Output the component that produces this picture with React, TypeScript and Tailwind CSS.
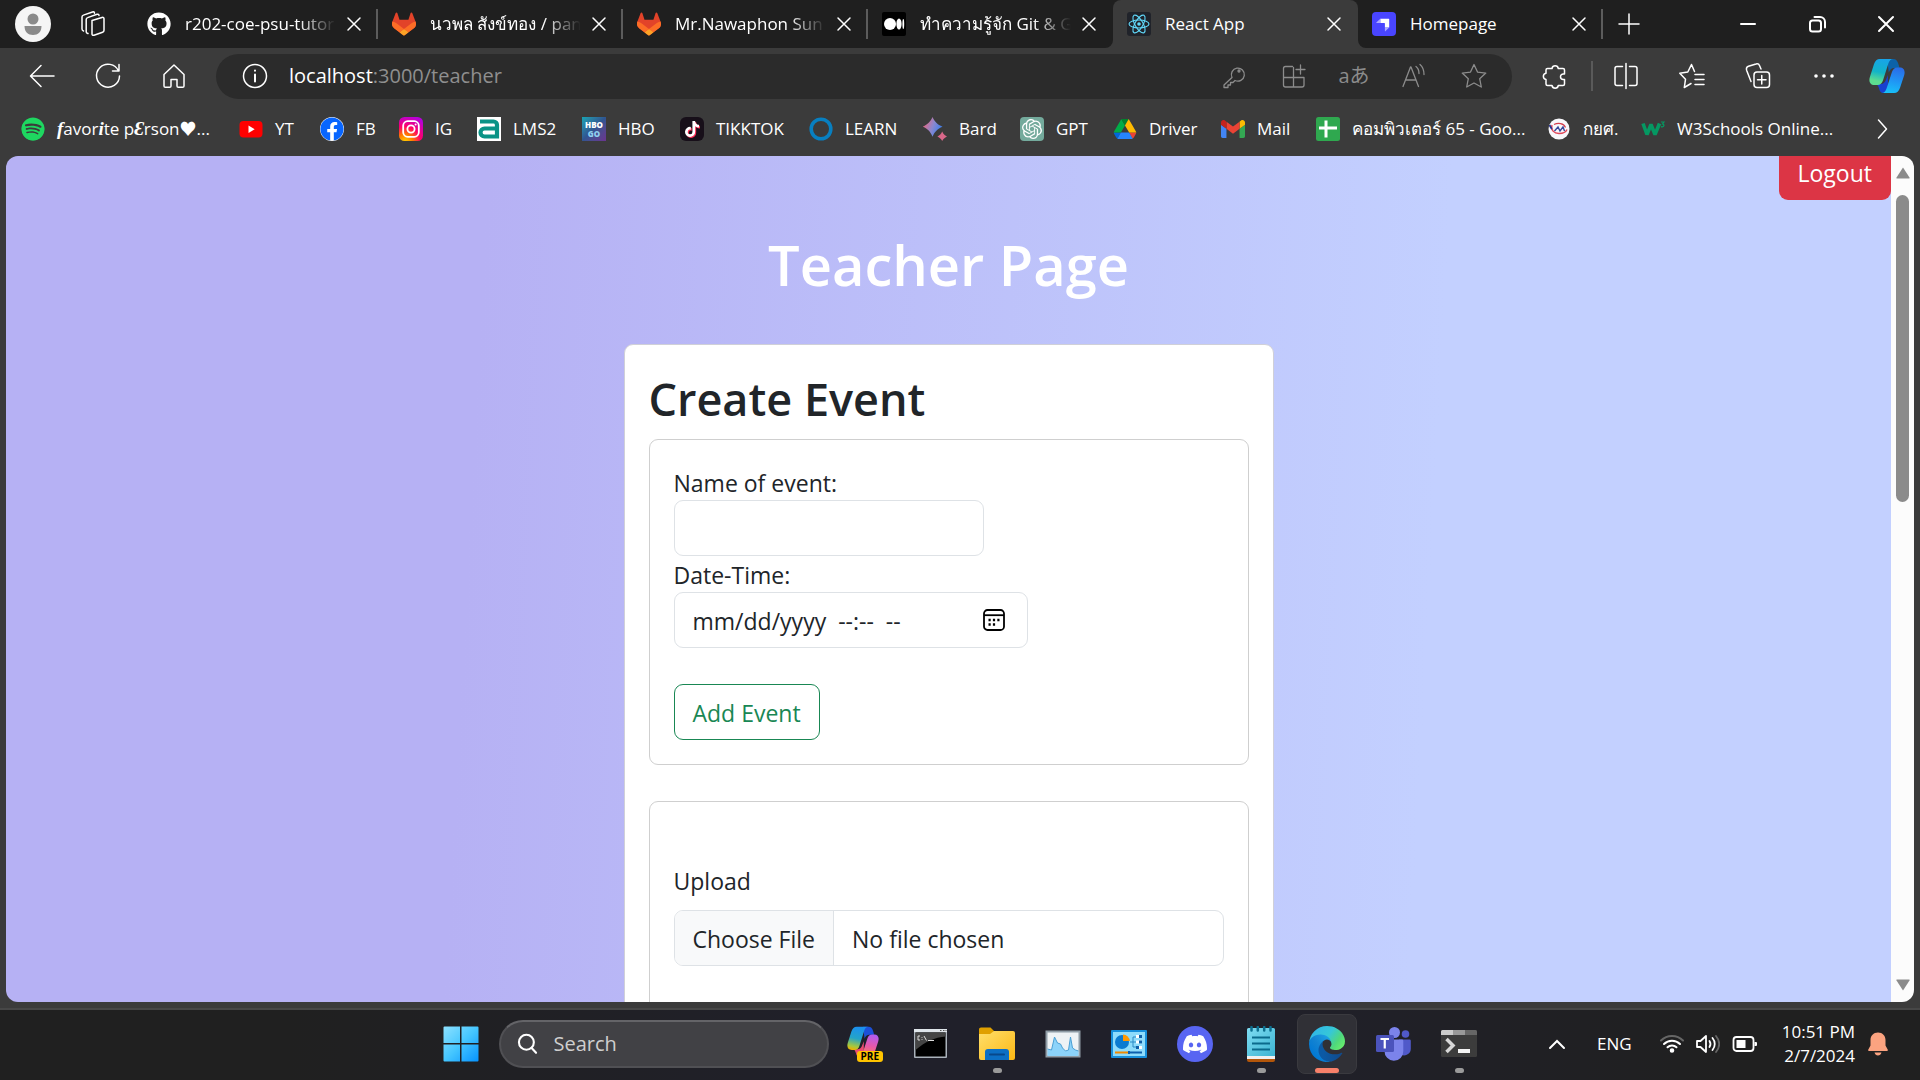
import type { ReactNode } from "react";
import { FaFacebook, FaGithub, FaTiktok } from "react-icons/fa";
import { FaSpotify } from "react-icons/fa6";
import { SiDiscord, SiOpenai } from "react-icons/si";

type IconProps = { className?: string };

function Line({ children, className = "size-7", width = 1.5 }: { children: ReactNode; className?: string; width?: number }) {
  return (
    <svg viewBox="0 0 28 28" className={className} fill="none" stroke="currentColor" strokeWidth={width} strokeLinecap="round" strokeLinejoin="round" aria-hidden="true">
      {children}
    </svg>
  );
}

function Gitlab() {
  return (
    <svg viewBox="0 0 25 24" className="size-6" aria-hidden="true">
      <path fill="#E24329" d="M24.507 9.5l-.034-.09L21.082.562a.896.896 0 00-1.694.091l-2.29 7.01H7.825L5.535.653a.898.898 0 00-1.694-.09L.451 9.411.416 9.5a6.297 6.297 0 002.09 7.278l.012.01.03.022 5.16 3.867 2.56 1.935 1.554 1.176a1.051 1.051 0 001.268 0l1.555-1.176 2.56-1.935 5.197-3.89.014-.01A6.297 6.297 0 0024.507 9.5z" />
      <path fill="#FC6D26" d="M24.507 9.5l-.034-.09a11.44 11.44 0 00-4.56 2.051l-7.447 5.632 4.742 3.584 5.197-3.89.014-.01A6.297 6.297 0 0024.507 9.5z" />
      <path fill="#FCA326" d="M7.707 20.677l2.56 1.935 1.555 1.176a1.051 1.051 0 001.268 0l1.555-1.176 2.56-1.935-4.743-3.584-4.755 3.584z" />
      <path fill="#FC6D26" d="M5.01 11.461a11.43 11.43 0 00-4.56-2.05L.416 9.5a6.297 6.297 0 002.09 7.278l.012.01.03.022 5.16 3.867 4.745-3.584-7.444-5.632z" />
    </svg>
  );
}

function Medium() {
  return (
    <svg viewBox="0 0 24 24" className="size-6" aria-hidden="true">
      <rect width="24" height="24" rx="2" fill="#000" />
      <circle cx="8" cy="12" r="6" fill="#fff" />
      <ellipse cx="17" cy="12" rx="2.6" ry="5.6" fill="#fff" />
      <ellipse cx="21.3" cy="12" rx="0.9" ry="5" fill="#fff" />
    </svg>
  );
}

function ReactLogo() {
  return (
    <svg viewBox="0 0 24 24" className="size-6" fill="none" stroke="#61dafb" strokeWidth="1.1" aria-hidden="true">
      <rect width="24" height="24" rx="3" fill="#20232a" stroke="none" />
      <ellipse cx="12" cy="12" rx="10" ry="4" />
      <ellipse cx="12" cy="12" rx="10" ry="4" transform="rotate(60 12 12)" />
      <ellipse cx="12" cy="12" rx="10" ry="4" transform="rotate(120 12 12)" />
      <circle cx="12" cy="12" r="1.8" fill="#61dafb" stroke="none" />
    </svg>
  );
}

function Strapi() {
  return (
    <svg viewBox="0 0 24 24" className="size-6" aria-hidden="true">
      <rect width="24" height="24" rx="4" fill="#4945ff" />
      <path fill="#fff" d="M8.3 6.8h8.4c.3 0 .5.2.5.5v8.1h-4.3v-3.8c0-.3-.2-.5-.5-.5H8.3z" />
      <path fill="#aaa8ff" d="M8.3 6.8v4.3H4.5c-.3 0-.4-.3-.2-.5zM12.9 15.4h4.3L13.3 19.3c-.2.2-.4 0-.4-.2z" />
    </svg>
  );
}

function Youtube() {
  return (
    <svg viewBox="0 0 24 24" className="size-6" aria-hidden="true">
      <rect x="0.5" y="4" width="23" height="16.5" rx="4" fill="#f00" />
      <path d="M9.5 8.5l6.200 3.700-6.200 3.700z" fill="#fff" />
    </svg>
  );
}

function Instagram() {
  return (
    <svg viewBox="0 0 24 24" className="size-6" fill="none" aria-hidden="true">
      <defs>
        <radialGradient id="ig" cx="0.25" cy="1.05" r="1.1">
          <stop offset="0" stopColor="#ffd600" />
          <stop offset="0.3" stopColor="#ff7a00" />
          <stop offset="0.6" stopColor="#ff0069" />
          <stop offset="1" stopColor="#b800d8" />
        </radialGradient>
      </defs>
      <rect width="24" height="24" rx="5.5" fill="url(#ig)" />
      <rect x="4.2" y="4.2" width="15.6" height="15.6" rx="4.5" stroke="#fff" strokeWidth="1.8" />
      <circle cx="12" cy="12" r="3.6" stroke="#fff" strokeWidth="1.8" />
      <circle cx="16.6" cy="7.4" r="1" fill="#fff" />
    </svg>
  );
}

function Lms() {
  return (
    <svg viewBox="0 0 24 24" className="size-6" fill="none" aria-hidden="true">
      <rect width="24" height="24" fill="#fff" />
      <path d="M3 4.500h13.500a3.500 3.500 0 0 1 3.500 3.500V19.500H7.500a4 4 0 0 1 0-8H20" stroke="#0a9386" strokeWidth="4.2" />
      <path d="M9 15.500h6" stroke="#fff" strokeWidth="1.5" />
    </svg>
  );
}

function Hbo() {
  return (
    <span className="flex size-6 flex-col items-center justify-center bg-linear-to-br from-[#12a5b4] via-[#2f5590] to-[#6a3390] text-[8px] leading-[9px] font-extrabold" aria-hidden="true">
      <span className="text-white">HBO</span>
      <span className="text-[#8fd0ee]">GO</span>
    </span>
  );
}

function Tiktok() {
  return (
    <span className="flex size-6 items-center justify-center rounded-md bg-[#170f19]" aria-hidden="true">
      <FaTiktok className="size-4 text-white drop-shadow-[1px_1px_0_#fe2c55]" />
    </span>
  );
}

function Bard() {
  return (
    <svg viewBox="0 0 24 24" className="size-6" aria-hidden="true">
      <defs>
        <linearGradient id="bard" x1="0" y1="0.3" x2="1" y2="0.7">
          <stop offset="0" stopColor="#f0647a" />
          <stop offset="0.5" stopColor="#8a88d0" />
          <stop offset="1" stopColor="#2f7df0" />
        </linearGradient>
      </defs>
      <path fill="url(#bard)" d="M9.500 0c2.200 4.800 4.900 7.500 10 9.700-5.100 2.200-7.800 4.900-10 10C7.300 14.600 4.600 11.900-.3 9.700 4.600 7.500 7.300 4.800 9.500 0z" />
      <path fill="#d9688a" d="M19.200 14.600c1.200 2.500 2.300 3.600 4.800 4.800-2.500 1.200-3.600 2.300-4.800 4.600-1.200-2.300-2.300-3.400-4.800-4.600 2.500-1.200 3.600-2.300 4.800-4.800z" />
    </svg>
  );
}

function Gpt() {
  return (
    <span className="flex size-6 items-center justify-center rounded-sm bg-[#74aa9c]" aria-hidden="true">
      <SiOpenai className="size-5 text-white" />
    </span>
  );
}

function Drive() {
  return (
    <svg viewBox="-3 -5 93.3 88" className="size-6" aria-hidden="true">
      <path fill="#0066da" d="m6.600 66.850 3.850 6.650c.8 1.400 1.950 2.500 3.300 3.300l13.750-23.800h-27.500c0 1.550.4 3.100 1.200 4.500z" />
      <path fill="#00ac47" d="m43.650 25-13.750-23.800c-1.350.8-2.500 1.900-3.300 3.300l-25.400 44a9.060 9.060 0 0 0-1.200 4.500h27.500z" />
      <path fill="#ea4335" d="m73.550 76.800c1.350-.8 2.500-1.900 3.300-3.300l1.600-2.750 7.650-13.250c.8-1.400 1.200-2.950 1.200-4.500h-27.502l5.852 11.500z" />
      <path fill="#00832d" d="m43.650 25 13.750-23.800c-1.350-.8-2.900-1.200-4.500-1.200h-18.500c-1.600 0-3.150.450-4.500 1.200z" />
      <path fill="#2684fc" d="m59.800 53h-32.300l-13.750 23.800c1.350.8 2.900 1.200 4.500 1.200h50.800c1.600 0 3.150-.450 4.500-1.200z" />
      <path fill="#ffba00" d="m73.400 26.500-12.700-22c-.8-1.400-1.950-2.500-3.300-3.300l-13.750 23.800 16.150 28h27.450c0-1.550-.4-3.100-1.200-4.500z" />
    </svg>
  );
}

function Gmail() {
  return (
    <svg viewBox="52 31 88 88" className="size-6" aria-hidden="true">
      <path fill="#4285f4" d="M58 108h14V74L52 59v43c0 3.320 2.690 6 6 6" />
      <path fill="#34a853" d="M120 108h14c3.320 0 6-2.690 6-6V59l-20 15" />
      <path fill="#fbbc04" d="M120 48v26l20-15v-8c0-7.420-8.470-11.650-14.400-7.200" />
      <path fill="#ea4335" d="M72 74V48l24 18 24-18v26L96 92" />
      <path fill="#c5221f" d="M52 51v8l20 15V48l-5.600-4.200c-5.940-4.450-14.400-.220-14.400 7.200" />
    </svg>
  );
}

function Sheets() {
  return (
    <svg viewBox="0 0 24 24" className="size-6" aria-hidden="true">
      <rect width="24" height="24" rx="2.5" fill="#2fa84f" />
      <path d="M8.500 3.500h3v6H21v3h-9.500v8h-3v-8H3v-3h5.500z" fill="#fff" />
    </svg>
  );
}

function LoanFund() {
  return (
    <svg viewBox="0 0 24 24" className="size-6" fill="none" aria-hidden="true">
      <circle cx="12" cy="12" r="10.5" fill="#f7f7fb" />
      <path d="M5 8c-1.500 5 2 8.500 7 8.500s7-1.500 8-4" stroke="#e0485a" strokeWidth="1.4" />
      <path d="M2.500 8c.5 1 1.500 3 2.500 4" stroke="#27348b" strokeWidth="1.8" />
      <path d="M7 7.500c4-2 10-1.500 11.500 3" stroke="#d43c4c" strokeWidth="1.2" />
      <path d="M7.500 14l3.500-4 2 4 3-4 1.500 4" stroke="#34459a" strokeWidth="1.4" />
    </svg>
  );
}

function W3() {
  return (
    <svg viewBox="0 0 24 24" className="size-6" fill="none" aria-hidden="true">
      <path d="M2 6.500 6 17.500l4-10 4 10 4.500-11" stroke="#059862" strokeWidth="3.6" strokeLinejoin="bevel" />
      <path d="M20 5h3l-1.500 2c2.300.3 1.800 3.500-1.500 2.600" stroke="#059862" strokeWidth="1.2" />
    </svg>
  );
}

function Learn() {
  return (
    <svg viewBox="0 0 24 24" className="size-6" fill="none" aria-hidden="true">
      <circle cx="12" cy="12" r="9.8" stroke="#087fc0" strokeWidth="3.6" />
    </svg>
  );
}

function Copilot({ className, warm = false }: IconProps & { warm?: boolean }) {
  const id = warm ? "warm" : "cool";
  return (
    <svg viewBox="0 0 40 40" className={className} aria-hidden="true">
      <defs>
        <linearGradient id={id + "a"} x1="0.5" y1="0" x2="0.3" y2="1">
          <stop offset="0" stopColor={warm ? "#1b8ff0" : "#18a4e8"} />
          <stop offset="0.5" stopColor={warm ? "#23a4c8" : "#12b4c8"} />
          <stop offset="0.85" stopColor={warm ? "#a8c83c" : "#5cdc90"} />
          <stop offset="1" stopColor={warm ? "#f0b000" : "#5cdc90"} />
        </linearGradient>
        <linearGradient id={id + "b"} x1="0.6" y1="0" x2="0.4" y2="1">
          <stop offset="0" stopColor={warm ? "#b05cf0" : "#2a6ce8"} />
          <stop offset="0.5" stopColor={warm ? "#e858a8" : "#2094f4"} />
          <stop offset="1" stopColor={warm ? "#f88850" : "#18c0f8"} />
        </linearGradient>
      </defs>
      <path d="M20 1h7c3 0 4.500 2 5.500 5l1.500 5h-6c-3 0-5 2-6 5z" fill={warm ? "#1c50d8" : "#0c62a8"} />
      <path d="M7 29h6c3 0 5-2 6-5l2-5v20h-5c-3 0-4-2-4.700-4.500C10.500 31.500 9.500 29 7 29z" fill={warm ? "#e84c70" : "#1840d0"} />
      <path d="M12 1h15c-3 0-4.500 2-5.500 5l-6 19c-1 3-3 5-6 5H6c-5 0-6.500-4-5-9L5.500 7C6.800 3 9 1 12 1z" fill={`url(#${id}a)`} />
      <path d="M28 39H14c3 0 4.500-2 5.500-5l6-18.500c1-3 3-5 6-5H34c5 0 6.500 4 5 9L34.500 33c-1.300 4-3.500 6-6.500 6z" fill={`url(#${id}b)`} />
    </svg>
  );
}

function Edge() {
  return (
    <svg viewBox="0 0 256 256" className="size-9" aria-hidden="true">
      <defs>
        <linearGradient id="edge1" x1="0.25" y1="0.5" x2="1" y2="0.5">
          <stop offset="0" stopColor="#0c59a4" />
          <stop offset="1" stopColor="#114a8b" />
        </linearGradient>
        <linearGradient id="edge2" x1="0.9" y1="0.3" x2="0.3" y2="0.9">
          <stop offset="0" stopColor="#1b9de2" />
          <stop offset="0.5" stopColor="#1383d2" />
          <stop offset="1" stopColor="#0078d4" />
        </linearGradient>
        <linearGradient id="edge3" x1="0" y1="0.2" x2="1" y2="0.7">
          <stop offset="0" stopColor="#2fb4ea" />
          <stop offset="0.5" stopColor="#36c7d8" />
          <stop offset="0.8" stopColor="#4fd87c" />
          <stop offset="1" stopColor="#66eb6e" />
        </linearGradient>
      </defs>
      <path fill="url(#edge1)" d="M231 190.500c-3.400 1.800-6.900 3.400-10.500 4.700a101.500 101.500 0 0 1-35.900 6.500c-47.300 0-88.500-32.500-88.500-74.300a31.500 31.500 0 0 1 16.400-27.300c-42.800 1.800-53.800 46.400-53.800 72.500 0 74 68.100 81.400 82.800 81.400 7.900 0 19.800-2.300 27-4.600l1.300-.4a128.300 128.300 0 0 0 66.600-52.800 4 4 0 0 0-5.400-5.700Z" />
      <path fill="url(#edge2)" d="M105.700 241.400a79.200 79.200 0 0 1-22.700-21.300 80.700 80.700 0 0 1 29.500-120c3.200-1.500 8.500-4.100 15.600-4a32.400 32.400 0 0 1 25.700 13 31.900 31.900 0 0 1 6.300 18.700c0-.2 24.500-79.600-80-79.600-43.900 0-80 41.600-80 78.200a130.200 130.200 0 0 0 12.100 56 128 128 0 0 0 156.400 67 75.500 75.500 0 0 1-62.800-8Z" />
      <path fill="url(#edge3)" d="M152.300 148.900c-.9 1-3.400 2.500-3.400 5.600 0 2.600 1.700 5.200 4.800 7.300 14.300 10 41.400 8.600 41.500 8.600a59.600 59.600 0 0 0 30.300-8.300 61.400 61.400 0 0 0 30.400-52.900c.3-22.400-8-37.300-11.300-43.900C223.500 23.900 177.700 0 128 0A128 128 0 0 0 0 126.200c.5-36.500 36.800-66 80-66 3.500 0 23.500.3 42 10 16.300 8.600 24.900 18.900 30.800 29.200 6.200 10.700 7.300 24.100 7.300 29.500 0 5.300-2.700 13.300-7.900 19.900Z" />
    </svg>
  );
}

function Windows() {
  return (
    <svg viewBox="0 0 36 36" className="size-9" aria-hidden="true">
      <defs>
        <linearGradient id="win" x1="0" y1="0" x2="36" y2="36" gradientUnits="userSpaceOnUse">
          <stop offset="0" stopColor="#8fe2ff" />
          <stop offset="0.5" stopColor="#45c6ff" />
          <stop offset="1" stopColor="#0491ff" />
        </linearGradient>
      </defs>
      <path fill="url(#win)" d="M1.500.5H17v16.500H.5V1.500a1 1 0 0 1 1-1zM18.500.5h16a1 1 0 0 1 1 1V17h-17zM.5 18.500H17v17H1.500a1 1 0 0 1-1-1zM18.500 18.500h17v16a1 1 0 0 1-1 1h-16z" />
    </svg>
  );
}

function CopilotPreview() {
  return (
    <span className="relative size-9" aria-hidden="true">
      <Copilot warm className="size-8" />
      <span className="absolute right-0 bottom-0 rounded-[3px] bg-[#ffc400] px-1 text-[10px] leading-[11px] font-bold text-black">PRE</span>
    </span>
  );
}

function Cmd() {
  return (
    <svg viewBox="0 0 36 36" className="size-9" aria-hidden="true">
      <rect x="1" y="3" width="33" height="29" rx="1" fill="#aab2bb" />
      <rect x="1" y="3" width="33" height="3" fill="#dfe5ea" />
      <path d="M27 4.500h1.500M30 4.500h1.500M32.500 4.500h1" stroke="#555" />
      <rect x="2.5" y="6.5" width="30" height="24" fill="#000" />
      <path d="M2.500 6.500h30v4C22 11 12 16 2.500 24z" fill="#454545" />
      <path d="M7 10H5v4h2M9 11v.8M9 13.200v.8M11 10l2.500 4.500M15 14.500h6" stroke="#ddd" fill="none" />
    </svg>
  );
}

function Explorer() {
  return (
    <svg viewBox="0 0 36 36" className="size-9" aria-hidden="true">
      <defs>
        <linearGradient id="folder" x1="0" y1="0" x2="1" y2="1">
          <stop offset="0" stopColor="#ffdf6b" />
          <stop offset="1" stopColor="#fcb814" />
        </linearGradient>
      </defs>
      <path d="M0 3.500C0 2.300.8 1.500 2 1.500h9.500L15 5v6H0z" fill="#e0a000" />
      <path d="M0 8h11l4-3h19a2 2 0 0 1 2 2v25a2 2 0 0 1-2 2H2a2 2 0 0 1-2-2z" fill="url(#folder)" />
      <path d="M6 34V26a3 3 0 0 1 3-3h18a3 3 0 0 1 3 3v8z" fill="#0c6fc4" />
      <path d="M11 28.500h14" stroke="#08488a" strokeWidth="2" strokeLinecap="round" />
    </svg>
  );
}

function Monitor() {
  return (
    <svg viewBox="0 0 36 36" className="size-9" aria-hidden="true">
      <rect x="0.5" y="4.5" width="35" height="27" fill="#8f9ca6" />
      <rect x="2.5" y="6.5" width="31" height="23" fill="#eef2f5" />
      <path d="M2.500 23l4 1 3-13 3 6 3 1 2 4 3 3 3-1 2-13 2 11 3 2 3 1v5h-31z" fill="#8cd3fa" />
      <path d="M2.500 23l4 1 3-13 3 6 3 1 2 4 3 3 3-1 2-13 2 11 3 2 3 1" fill="none" stroke="#4a9fd4" />
    </svg>
  );
}

function ControlPanel() {
  return (
    <svg viewBox="0 0 36 36" className="size-9" fill="none" aria-hidden="true">
      <rect y="4" width="36" height="28" rx="1" fill="#1790dc" />
      <rect x="2" y="6" width="32" height="24" fill="#8edcfb" />
      <circle cx="11" cy="16" r="7" fill="#0b7bd0" />
      <path d="M12 15V8.500a6.800 6.800 0 0 1 6.800 6.500z" fill="#ff9800" />
      <path d="M19 16h3v-5h3M22 16h3M22 16v5h3" stroke="#2c8ac4" />
      <path d="M25 9h6v3h-6zM25 14.500h6v3h-6zM25 20h6v3h-6z" fill="#fff" />
      <path d="M28 9h3v3h-3zM28 14.500h3v3h-3zM25 20h3v3h-3z" fill="#0d5ea8" />
      <path d="M4 26.500h14" stroke="#f08a00" strokeWidth="2" />
      <path d="M18 26.500h13M18 25v3" stroke="#0b5fae" strokeWidth="2" />
    </svg>
  );
}

function Discord() {
  return (
    <span className="flex size-9 items-center justify-center rounded-full bg-[#5865f2]" aria-hidden="true">
      <SiDiscord className="size-6 text-white" />
    </span>
  );
}

function Notepad() {
  return (
    <svg viewBox="0 0 36 36" className="size-9" aria-hidden="true">
      <defs>
        <linearGradient id="note" x1="0" y1="0" x2="1" y2="1">
          <stop offset="0" stopColor="#7fdcf2" />
          <stop offset="1" stopColor="#3cb4d2" />
        </linearGradient>
      </defs>
      <path d="M4 31h28v3a2 2 0 0 1-2 2H6a2 2 0 0 1-2-2z" fill="#b3560a" />
      <rect x="4" y="29" width="28" height="4" fill="#f0f0f0" />
      <path d="M4 3.500a1.500 1.500 0 0 1 1.500-1.500h25A1.500 1.500 0 0 1 32 3.500V30H4z" fill="url(#note)" />
      <path d="M9 11.500h18M9 17.500h18M9 23.500h18" stroke="#0b6a8c" strokeWidth="2" />
      <path d="M8.500 1v3.500M14.800 1v3.500M21.200 1v3.500M27.500 1v3.500" stroke="#0d6f8f" strokeWidth="2.5" strokeLinecap="round" />
    </svg>
  );
}

function Teams() {
  return (
    <svg viewBox="0 0 36 36" className="size-9" aria-hidden="true">
      <circle cx="30.5" cy="8" r="3.8" fill="#5059c9" />
      <path d="M24 13.500h10.500a1.300 1.300 0 0 1 1.300 1.300V23a6.500 6.500 0 0 1-11 4.500z" fill="#5059c9" />
      <circle cx="19.5" cy="6.5" r="5.5" fill="#7b83eb" />
      <path d="M11 13.500h16a1.300 1.300 0 0 1 1.300 1.300V25a9.500 9.500 0 0 1-9.500 9.800A9.500 9.500 0 0 1 9.500 25z" fill="#7b83eb" />
      <rect x="1" y="9" width="18" height="17" rx="1.5" fill="#4b53bc" />
      <path d="M5.500 13h8.500M9.750 13v9.500" stroke="#fff" strokeWidth="2.2" />
    </svg>
  );
}

function Terminal() {
  return (
    <svg viewBox="0 0 36 36" className="size-9" fill="none" aria-hidden="true">
      <rect y="4" width="36" height="27" rx="1.5" fill="#3c3c3c" />
      <path d="M0 9V5.500A1.500 1.500 0 0 1 1.500 4H12v5z" fill="#ccc" />
      <path d="M12 4h12v5H12z" fill="#999" />
      <path d="M24 4h10.500A1.500 1.500 0 0 1 36 5.500V9H24z" fill="#666" />
      <path d="M5.500 13l6.500 6.500L5.500 26" stroke="#d8d8d8" strokeWidth="3.5" />
      <path d="M17 25h12" stroke="#f4f4f4" strokeWidth="4" />
    </svg>
  );
}

function CloseMark() {
  return (
    <svg viewBox="0 0 24 24" className="size-6" stroke="currentColor" strokeWidth="1.5" strokeLinecap="round" aria-hidden="true">
      <path d="M6 6l12 12M18 6L6 18" />
    </svg>
  );
}

function Tab({ icon, title, active = false, divider = false, fade = false }: { icon: ReactNode; title: string; active?: boolean; divider?: boolean; fade?: boolean }) {
  return (
    <div className={`flex h-12 w-[245px] items-center pl-[14px] ${active ? "rounded-t-lg bg-[#3b3b3b]" : ""}`}>
      <button type="button" className="flex min-w-0 flex-1 items-center gap-[14px] text-left">
        <span className="shrink-0">{icon}</span>
        <span className={`min-w-0 flex-1 overflow-hidden whitespace-nowrap ${fade ? "mask-[linear-gradient(to_right,#000_75%,transparent)]" : ""}`}>{title}</span>
      </button>
      <button type="button" aria-label={`Close ${title}`} className="ml-[6px]">
        <CloseMark />
      </button>
      <span className={`ml-[10px] h-[30px] w-[2px] ${divider ? "bg-[#5c5c5c]" : ""}`} />
    </div>
  );
}

function ToolButton({ label, children, narrow = false }: { label: string; children: ReactNode; narrow?: boolean }) {
  return (
    <button type="button" aria-label={label} className={`flex h-10 shrink-0 items-center justify-center ${narrow ? "w-[60px]" : "w-[66px]"}`}>
      {children}
    </button>
  );
}

function Script({ children }: { children: string }) {
  return <span className="font-['Liberation_Serif','DejaVu_Serif',serif] text-[19px] font-bold italic">{children}</span>;
}

const bookmarks: { id: string; label: ReactNode; icon: ReactNode; width: string }[] = [
  {
    id: "favorite",
    label: (
      <span>
        <Script>f</Script>avor<Script>i</Script>te p<Script>Ɛ</Script>rson♥...
      </span>
    ),
    icon: <FaSpotify className="size-6 rounded-full text-[#1ed760]" />,
    width: "w-[218px]",
  },
  { id: "yt", label: "YT", icon: <Youtube />, width: "w-[81px]" },
  { id: "fb", label: "FB", icon: <FaFacebook className="size-6 rounded-full bg-white text-[#0866ff]" />, width: "w-[79px]" },
  { id: "ig", label: "IG", icon: <Instagram />, width: "w-[78px]" },
  { id: "lms", label: "LMS2", icon: <Lms />, width: "w-[105px]" },
  { id: "hbo", label: "HBO", icon: <Hbo />, width: "w-[98px]" },
  { id: "tiktok", label: "TIKKTOK", icon: <Tiktok />, width: "w-[129px]" },
  { id: "learn", label: "LEARN", icon: <Learn />, width: "w-[114px]" },
  { id: "bard", label: "Bard", icon: <Bard />, width: "w-[97px]" },
  { id: "gpt", label: "GPT", icon: <Gpt />, width: "w-[93px]" },
  { id: "drive", label: "Driver", icon: <Drive />, width: "w-[108px]" },
  { id: "mail", label: "Mail", icon: <Gmail />, width: "w-[95px]" },
  { id: "sheets", label: "คอมพิวเตอร์ 65 - Goo...", icon: <Sheets />, width: "w-[231px]" },
  { id: "loan", label: "กยศ.", icon: <LoanFund />, width: "w-[94px]" },
  { id: "w3", label: "W3Schools Online...", icon: <W3 />, width: "w-[218px]" },
];

const apps: { label: string; icon: ReactNode; running?: boolean; current?: boolean }[] = [
  { label: "Copilot", icon: <CopilotPreview /> },
  { label: "Command Prompt", icon: <Cmd /> },
  { label: "File Explorer", icon: <Explorer />, running: true },
  { label: "Resource Monitor", icon: <Monitor /> },
  { label: "Control Panel", icon: <ControlPanel /> },
  { label: "Discord", icon: <Discord /> },
  { label: "Notepad", icon: <Notepad />, running: true },
  { label: "Microsoft Edge", icon: <Edge />, current: true },
  { label: "Microsoft Teams", icon: <Teams /> },
  { label: "Terminal", icon: <Terminal />, running: true },
];

function TabStrip() {
  return (
    <header className="flex h-12 shrink-0 bg-[linear-gradient(#1f1f1f_50%,#3b3b3b_50%)] text-[17px]">
      <div className="flex items-center rounded-br-lg bg-[#1f1f1f]">
        <button type="button" aria-label="Profile" className="ml-[15px]">
          <svg viewBox="0 0 36 36" className="size-9" aria-hidden="true">
            <circle cx="18" cy="18" r="18" fill="#f5f5f5" />
            <circle cx="18" cy="13" r="5.5" fill="#8a8a8a" />
            <path d="M9.500 20h17c0 6-3.500 9-8.500 9s-8.500-3-8.500-9z" fill="#8a8a8a" />
          </svg>
        </button>
        <button type="button" aria-label="Workspaces" className="mr-[26px] ml-7">
          <Line>
            <path d="M13 10.500l10-3c1.300-.4 2 .2 2 1.300v11.500c0 1-.4 1.600-1.400 1.900l-8.600 3c-1.300.4-2-.2-2-1.300z" />
            <path d="M9 23.500l-.8-.3c-.8-.3-1-.8-1-1.700V9.500c0-1 .4-1.600 1.400-1.900L18 4.300c1.200-.4 2 0 2 1.200" />
            <path d="M4.500 21c-.9-.3-1.500-.9-1.500-1.900V7c0-1 .4-1.600 1.400-1.900L13.500 2c1.200-.4 2 0 2 1.200" />
          </Line>
        </button>
        <Tab icon={<FaGithub className="size-6" />} title="r202-coe-psu-tutor" divider fade />
        <Tab icon={<Gitlab />} title="นวพล สังข์ทอง / pann" divider fade />
        <Tab icon={<Gitlab />} title="Mr.Nawaphon Sun" divider fade />
        <Tab icon={<Medium />} title="ทำความรู้จัก Git & G" fade />
      </div>
      <Tab icon={<ReactLogo />} title="React App" active />
      <div className="flex flex-1 items-center rounded-bl-lg bg-[#1f1f1f]">
        <Tab icon={<Strapi />} title="Homepage" divider />
        <button type="button" aria-label="New tab" className="ml-3">
          <Line>
            <path d="M14 4v20M4 14h20" />
          </Line>
        </button>
        <div className="ml-auto flex">
          <button type="button" aria-label="Minimize" className="flex w-[69px] justify-center">
            <Line width={2}><path d="M7 14h14" /></Line>
          </button>
          <button type="button" aria-label="Restore" className="flex w-[69px] justify-center">
            <Line width={2}>
              <rect x="7" y="10.5" width="11" height="11" rx="2.5" />
              <path d="M11.500 7H17a5 5 0 0 1 5 5v5.500" />
            </Line>
          </button>
          <button type="button" aria-label="Close window" className="flex w-[69px] justify-center">
            <Line width={2}><path d="M7 7l14 14M21 7L7 21" /></Line>
          </button>
        </div>
      </div>
    </header>
  );
}

function Toolbar() {
  return (
    <div className="flex h-14 shrink-0 items-center pl-[9px]">
      <ToolButton label="Back">
        <Line><path d="M26 14H3M13 3.500L2.500 14 13 24.500" /></Line>
      </ToolButton>
      <ToolButton label="Refresh">
        <Line><path d="M24.500 9A11.500 11.500 0 1 0 25.500 14M25 2.500V9h-6.500" /></Line>
      </ToolButton>
      <ToolButton label="Home">
        <Line><path d="M4 12.500L14 3l10 9.500V24c0 .8-.5 1.300-1.300 1.300h-4.400c-.8 0-1.300-.5-1.300-1.300v-6.500h-6V24c0 .8-.5 1.300-1.300 1.300H5.300C4.500 25.300 4 24.800 4 24z" /></Line>
      </ToolButton>
      <div className="ml-[9px] flex h-[45px] flex-1 items-center rounded-full bg-[#2b2b2b] pr-2 pl-[25px]">
        <button type="button" aria-label="Site information">
          <Line><circle cx="14" cy="14" r="11.5" /><path d="M14 12.500v7M14 8.500v.3" strokeWidth={2} /></Line>
        </button>
        <div className="ml-5 flex-1 text-[20px] text-[#8f8f8f]">
          <span className="text-white">localhost</span>:3000/teacher
        </div>
        <div className="flex text-[#8c8c8c]">
          <ToolButton label="Passwords" narrow>
            <Line width={1.3}><path d="M12 15.500l-8 7.500v2.500h4V23h2.500v-2.500H13l2-2a6.500 6.500 0 1 0-3-3z" /><circle cx="19" cy="9" r="1" /></Line>
          </ToolButton>
          <ToolButton label="Apps" narrow>
            <Line width={1.3}><path d="M12.500 4.500H5.500a2 2 0 0 0-2 2v16.500a2 2 0 0 0 2 2H22a2 2 0 0 0 2-2v-7.500H3.500M13.500 25V5.500M20.500 3v9M16 7.500h9" /></Line>
          </ToolButton>
          <ToolButton label="Translate" narrow>
            <span className="text-[20px]">aあ</span>
          </ToolButton>
          <ToolButton label="Read aloud" narrow>
            <Line width={1.3}><path d="M3 24.500L10.500 5h.5l7.500 19.500M5.500 18h10.500M16 4.500c2 1.500 3 4.500 3 7M20 2.500c3 2.500 4 6 4 10" /></Line>
          </ToolButton>
          <ToolButton label="Add to favorites" narrow>
            <Line width={1.3}><path d="M14 2.500l3.500 7.600 8.300 1-6.100 5.600 1.600 8.300L14 21l-7.300 4 1.600-8.300-6.100-5.600 8.300-1z" /></Line>
          </ToolButton>
        </div>
      </div>
      <div className="mr-[3px] ml-[10px] flex items-center">
        <ToolButton label="Extensions">
          <Line><path d="M11 6.500a3.200 3.200 0 0 1 6.300 0H22a1.500 1.500 0 0 1 1.500 1.500v4h-1.300a2.700 2.700 0 0 0 0 5.400h1.300V22a1.500 1.500 0 0 1-1.500 1.500h-4.700a3.200 3.200 0 0 1-6.300 0H6.500A1.500 1.500 0 0 1 5 22v-4.500a3.200 3.200 0 0 1 0-6.300V8a1.500 1.500 0 0 1 1.500-1.500z" /></Line>
        </ToolButton>
        <span className="ml-[3px] h-[30px] w-[2px] bg-[#5a5a5a]" />
        <ToolButton label="Split screen">
          <Line><path d="M10.500 4.500H5a2 2 0 0 0-2 2v15a2 2 0 0 0 2 2h5.500M17.500 4.500H23a2 2 0 0 1 2 2v15a2 2 0 0 1-2 2h-5.500M14 1.500v25" /></Line>
        </ToolButton>
        <ToolButton label="Favorites">
          <Line><path d="M16.500 9.500l-3-7-3.700 7.500-8 1.300 5.700 6-1.200 8.200L13 21.500M17 12.500h9M17 17.500h9M17 22.500h9" /></Line>
        </ToolButton>
        <ToolButton label="Collections">
          <Line><rect x="10" y="10" width="15.5" height="15.5" rx="3" /><path d="M17.750 13.500v8.500M13.500 17.750H22M7 19.500L2.700 8.500C2 6.500 2.700 5 4.500 4.300L12 2c1.500-.5 3 .2 3.600 1.700L17 7" /></Line>
        </ToolButton>
        <ToolButton label="Settings and more">
          <svg viewBox="0 0 28 28" className="size-7" fill="currentColor" aria-hidden="true"><circle cx="6" cy="14" r="1.8" /><circle cx="14" cy="14" r="1.8" /><circle cx="22" cy="14" r="1.8" /></svg>
        </ToolButton>
        <ToolButton label="Copilot" narrow>
          <Copilot className="h-10 w-9" />
        </ToolButton>
      </div>
    </div>
  );
}

function Bookmarks() {
  return (
    <nav aria-label="Favorites bar" className="flex h-[52px] shrink-0 items-center pr-6 pb-[2px] pl-[21px] text-[17px] leading-6">
      {bookmarks.map((b) => (
        <a key={b.id} href="#" className={`flex shrink-0 items-center gap-3 whitespace-nowrap ${b.width}`}>
          <span className="shrink-0">{b.icon}</span>
          {b.label}
        </a>
      ))}
      <button type="button" aria-label="More favorites" className="ml-auto">
        <Line><path d="M10.500 5l8 9-8 9" /></Line>
      </button>
    </nav>
  );
}

function Page() {
  return (
    <div className="mx-[6px] flex min-h-0 flex-1 overflow-hidden rounded-xl">
      <main className="relative min-w-0 flex-1 overflow-hidden bg-[linear-gradient(93deg,#b6b1f4_25%,#c3d0ff_75%)] pt-[72px] text-[23px] leading-9 text-[#212529]">
        <button type="button" className="absolute -top-3 right-0 h-14 rounded-[9px] bg-[#dc3545] px-[19px] pt-[2px] text-white">Logout</button>
        <h1 className="text-center text-[56px] leading-[72px] font-semibold text-white">Teacher Page</h1>
        <section className="mx-auto mt-11 w-full max-w-[650px] rounded-[9px] border border-[#d0d0d8] bg-white p-6">
          <h2 className="mb-[10px] text-[45px] leading-[60px] font-semibold">Create Event</h2>
          <form className="rounded-[9px] border border-[#cfcfcf] p-6">
            <label htmlFor="event-name" className="block h-9 pt-[1px]">Name of event:</label>
            <input id="event-name" type="text" className="block h-14 w-[310px] rounded-[9px] border border-[#dee2e6] px-[18px] outline-none" />
            <label htmlFor="event-date" className="block h-9 pt-[1px]">Date-Time:</label>
            <div className="flex h-14 w-[354px] items-center rounded-[9px] border border-[#dee2e6] pr-[22px] pl-[18px]">
              <input id="event-date" type="text" placeholder="mm/dd/yyyy  --:--  --" className="min-w-0 flex-1 pt-[2px] whitespace-pre outline-none placeholder:text-[#212529]" />
              <button type="button" aria-label="Show date picker" className="text-black">
                <svg viewBox="0 0 22 22" className="size-[22px]" fill="none" stroke="currentColor" strokeWidth="1.8" aria-hidden="true">
                  <rect x="1" y="1" width="20" height="20" rx="3.5" />
                  <path d="M1 6.200h20" />
                  <path d="M5.500 11h2.200M9.900 11h2.200M14.300 11h2.200M5.500 15.500h2.200M9.900 15.500h2.200" strokeWidth="2.4" />
                </svg>
              </button>
            </div>
            <button type="button" className="mt-9 block h-14 rounded-[9px] border border-[#198754] px-[18px] pt-[2px] text-[#198754]">Add Event</button>
          </form>
          <form className="mt-9 rounded-[9px] border border-[#cfcfcf] px-6 pt-[60px] pb-20">
            <label htmlFor="upload" className="mb-3 block h-9 pt-[1px]">Upload</label>
            <input
              id="upload"
              type="file"
              className="block h-14 w-full overflow-hidden rounded-[9px] border border-[#dee2e6] leading-[56px] file:mr-[18px] file:h-[56px] file:border-r file:border-[#dee2e6] file:bg-[#f8f9fa] file:px-[18px]"
            />
          </form>
        </section>
      </main>
      <div className="flex w-[23px] shrink-0 flex-col items-center bg-[#fcfcfc] py-[11px] text-[#8b8b8b]" aria-hidden="true">
        <svg viewBox="0 0 14 12" className="h-3 w-[14px]" fill="currentColor"><path d="M7 0.500L13.500 10.500c.3.600 0 1-.6 1H1.100c-.6 0-.9-.4-.6-1z" /></svg>
        <span className="mt-4 h-[307px] w-[13px] rounded-full bg-current" />
        <svg viewBox="0 0 14 12" className="mt-auto h-3 w-[14px]" fill="currentColor"><path d="M7 11.500L.5 1.500C.2.900.5.500 1.100.500h11.800c.6 0 .9.400.6 1z" /></svg>
      </div>
    </div>
  );
}

function Taskbar() {
  return (
    <footer className="grid h-[70px] shrink-0 grid-cols-[1fr_auto_1fr] items-center bg-[linear-gradient(90deg,#202020_15%,#20202a_45%,#20202a_65%,#202020_90%)] pb-[2px]">
      <span />
      <div className="flex items-center">
        <button type="button" aria-label="Start" className="flex w-[66px] justify-center">
          <Windows />
        </button>
        <label className="mr-[3px] ml-[5px] flex h-12 w-[330px] items-center gap-[14px] rounded-full border-2 border-[#505054] border-t-[#646468] bg-[#414145] pl-[14px]">
          <Line width={2.4}><circle cx="13" cy="12" r="8.5" /><path d="M19 18.500l5 5.500" /></Line>
          <input type="text" aria-label="Search" placeholder="Search" className="w-full min-w-0 bg-transparent text-[20px] outline-none placeholder:text-[#cfcfcf]" />
        </label>
        {apps.map((a) => (
          <button key={a.label} type="button" aria-label={a.label} className="flex w-[66px] justify-center">
            <span className={`relative flex size-[60px] items-center justify-center rounded-lg ${a.current ? "border border-[#3a3a3f] bg-[#303036]" : ""}`}>
              {a.icon}
              {a.running && <span className="absolute bottom-[1px] h-[5px] w-[9px] rounded-full bg-[#9a9a9a]" />}
              {a.current && <span className="absolute bottom-0 h-[5px] w-6 rounded-full bg-[#f8816a]" />}
            </span>
          </button>
        ))}
      </div>
      <div className="flex items-center justify-end pr-8 text-[17px] leading-6 text-white">
        <button type="button" aria-label="Show hidden icons" className="mr-[30px]">
          <svg viewBox="0 0 20 20" className="size-5" fill="none" stroke="currentColor" strokeWidth="2" strokeLinecap="round" aria-hidden="true"><path d="M3 14l7-7 7 7" /></svg>
        </button>
        <span className="mr-7">ENG</span>
        <span className="mr-6 flex items-center gap-3">
          <svg viewBox="0 0 24 20" className="h-5 w-6" fill="none" stroke="currentColor" strokeWidth="2" strokeLinecap="round" aria-label="Wi-Fi">
            <path d="M1 6.500a15.500 15.500 0 0 1 22 0" stroke="#666" />
            <path d="M4 10a11.300 11.300 0 0 1 16 0M7.500 13.300a6.300 6.300 0 0 1 9 0" />
            <circle cx="12" cy="16.5" r="1.3" fill="currentColor" />
          </svg>
          <svg viewBox="0 0 24 20" className="h-5 w-6" fill="none" stroke="currentColor" strokeWidth="1.8" strokeLinecap="round" strokeLinejoin="round" aria-label="Volume">
            <path d="M1 7v6h3.500L10 18V2L4.500 7zM13.500 7c1.300 2 1.300 4 0 6M16.500 4c3 3.500 3 8.500 0 12" />
            <path d="M20 2c4 5 4 11 0 16" stroke="#666" />
          </svg>
          <svg viewBox="0 0 26 20" className="h-5 w-[26px]" fill="none" stroke="currentColor" strokeWidth="1.8" aria-label="Battery">
            <rect x="1.5" y="3" width="20" height="14" rx="3" />
            <rect x="4.5" y="6" width="9" height="8" fill="currentColor" stroke="none" />
            <path d="M22.500 8h1.500a1 1 0 0 1 1 1v2a1 1 0 0 1-1 1h-1.500z" fill="currentColor" stroke="none" />
          </svg>
        </span>
        <span className="mr-[13px] text-right">
          <span className="block">10:51 PM</span>
          <span className="block">2/7/2024</span>
        </span>
        <button type="button" aria-label="Notifications">
          <svg viewBox="0 0 20 24" className="h-6 w-5" fill="#fba380" aria-hidden="true">
            <path d="M10 .500c4.500 0 7.500 3.300 7.500 7.500v5.500l2.300 4.300c.2.600 0 1.200-.7 1.200H.9c-.7 0-.9-.6-.7-1.200l2.300-4.300V8C2.500 3.800 5.500.500 10 .500zM6.500 20.500h7c-.5 1.800-1.800 3-3.500 3s-3-1.200-3.500-3z" />
          </svg>
        </button>
      </div>
    </footer>
  );
}

export default function App() {
  return (
    <div className="flex h-screen flex-col overflow-hidden bg-[#3b3b3b] font-['Open_Sans','Noto_Sans','Noto_Sans_CJK_JP',sans-serif] text-white">
      <TabStrip />
      <Toolbar />
      <Bookmarks />
      <Page />
      <div className="h-2 shrink-0 border-b-2 border-[#474747]" />
      <Taskbar />
    </div>
  );
}
